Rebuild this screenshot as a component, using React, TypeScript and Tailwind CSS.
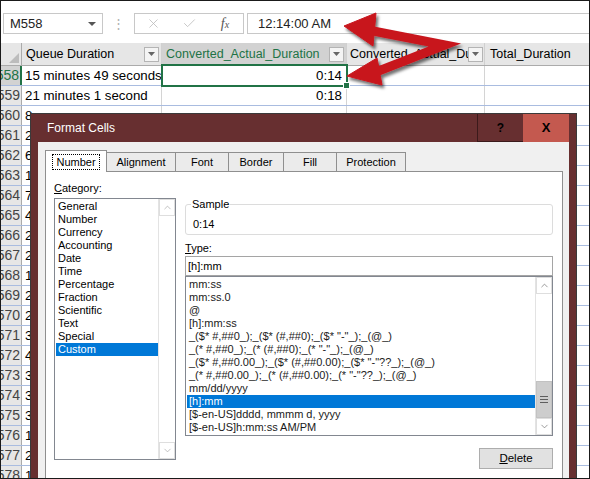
import { X, Check, ChevronUp, ChevronDown } from 'lucide-react'

const categories = [
  'General',
  'Number',
  'Currency',
  'Accounting',
  'Date',
  'Time',
  'Percentage',
  'Fraction',
  'Scientific',
  'Text',
  'Special',
  'Custom',
]

const typeFormats = [
  'mm:ss',
  'mm:ss.0',
  '@',
  '[h]:mm:ss',
  '_($* #,##0_);_($* (#,##0);_($* "-"_);_(@_)',
  '_(* #,##0_);_(* (#,##0);_(* "-"_);_(@_)',
  '_($* #,##0.00_);_($* (#,##0.00);_($* "-"??_);_(@_)',
  '_(* #,##0.00_);_(* (#,##0.00);_(* "-"??_);_(@_)',
  'mm/dd/yyyy',
  '[h]:mm',
  '[$-en-US]dddd, mmmm d, yyyy',
  '[$-en-US]h:mm:ss AM/PM',
]

// rows below 559 sit under the dialog, only their first digit shows
const rows: { n: number; queue: string; conv: string }[] = [
  { n: 558, queue: '15 minutes 49 seconds', conv: '0:14' },
  { n: 559, queue: '21 minutes 1 second', conv: '0:18' },
  { n: 560, queue: '8', conv: '' },
  { n: 561, queue: '2', conv: '' },
  { n: 562, queue: '6', conv: '' },
  { n: 563, queue: '1', conv: '' },
  { n: 564, queue: '7', conv: '' },
  { n: 565, queue: '4', conv: '' },
  { n: 566, queue: '2', conv: '' },
  { n: 567, queue: '2', conv: '' },
  { n: 568, queue: '1', conv: '' },
  { n: 569, queue: '2', conv: '' },
  { n: 570, queue: '2', conv: '' },
  { n: 571, queue: '3', conv: '' },
  { n: 572, queue: '4', conv: '' },
  { n: 573, queue: '3', conv: '' },
  { n: 574, queue: '3', conv: '' },
  { n: 575, queue: '3', conv: '' },
  { n: 576, queue: '1', conv: '' },
  { n: 577, queue: '2', conv: '' },
  { n: 578, queue: '1', conv: '' },
]

const tabs = [
  { label: 'Number', w: 'w-[62px]' },
  { label: 'Alignment', w: 'w-[70px]' },
  { label: 'Font', w: 'w-[54px]' },
  { label: 'Border', w: 'w-[56px]' },
  { label: 'Fill', w: 'w-[54px]' },
  { label: 'Protection', w: 'w-[70px]' },
]

function FilterButton() {
  return (
    <span className="w-[15px] h-[15px] border border-[#b4b4b4] bg-[#f4f4f4] flex items-center justify-center flex-shrink-0">
      <svg width="7" height="4" viewBox="0 0 7 4">
        <path d="M0 0h7L3.5 4z" fill="#666" />
      </svg>
    </span>
  )
}

function ScrollBar({ thumb, color }: { thumb?: boolean; color: string }) {
  return (
    <div className="w-[17px] flex-shrink-0 flex flex-col border-l border-[#e3e3e3] bg-white">
      <div className="h-[17px] border border-[#dedede] flex items-center justify-center">
        <ChevronUp size={11} strokeWidth={1.5} color={color} />
      </div>
      <div className="flex-1 flex flex-col justify-end">
        {thumb && (
          <div className="h-[37px] bg-[#cdcdcd] border border-[#c2c2c2] flex flex-col items-center justify-center gap-[2px]">
            <span className="w-[8px] h-[1px] bg-[#5e5e5e]" />
            <span className="w-[8px] h-[1px] bg-[#5e5e5e]" />
            <span className="w-[8px] h-[1px] bg-[#5e5e5e]" />
          </div>
        )}
      </div>
      <div className="h-[17px] border border-[#dedede] flex items-center justify-center">
        <ChevronDown size={11} strokeWidth={1.5} color={color} />
      </div>
    </div>
  )
}

function FormatCellsDialog() {
  return (
    <div className="absolute left-[29px] top-[112px] w-[547px] h-[380px] bg-[#672f30] border border-[#3a3a3a] flex flex-col font-['Liberation_Sans',Arial,sans-serif] text-[11px] text-black">
      {/* Title bar */}
      <div className="h-[28px] flex items-stretch pr-[7px] flex-shrink-0">
        <div className="flex-1 flex items-center pl-[16px] text-[12px] text-white">Format Cells</div>
        <div className="w-[46px] border-l border-b border-[#3b1a1b] flex items-center justify-center text-[12px] font-bold">?</div>
        <div className="w-[46px] bg-[#c4594f] flex items-center justify-center text-[13px] font-bold">X</div>
      </div>

      {/* Body */}
      <div className="flex-1 mx-[7px] bg-[#f0f0f0] pl-[7px] pt-[8px] flex flex-col">
        <div className="flex items-end h-[21px]">
          {tabs.map((t, i) =>
            i === 0 ? (
              <div
                key={t.label}
                className={`${t.w} h-[22px] -mb-[1px] relative z-10 bg-white border border-[#8f8f8f] border-b-0 flex items-center justify-center`}
              >
                <span className="outline-1 outline-dotted outline-black px-[3px] leading-[14px]">{t.label}</span>
              </div>
            ) : (
              <div
                key={t.label}
                className={`${t.w} h-[19px] -ml-[1px] bg-[#ebebeb] border border-[#8f8f8f] border-b-0 flex items-center justify-center`}
              >
                {t.label}
              </div>
            ),
          )}
        </div>

        <div className="w-[518px] flex-1 border border-[#8f8f8f] bg-white flex gap-[9px] pl-[8px]">
          {/* Category */}
          <div className="w-[122px] flex flex-col">
            <div className="mt-[9px] leading-[14px]">
              <span className="underline">C</span>ategory:
            </div>
            <div className="mt-[3px] h-[262px] border border-[#828790] flex">
              <div className="flex-1 pt-[1px] pl-[1px]">
                {categories.map((c) => (
                  <div
                    key={c}
                    className={`h-[13px] leading-[13px] pl-[2px] ${c === 'Custom' ? 'bg-[#0078d7] text-white' : ''}`}
                  >
                    {c}
                  </div>
                ))}
              </div>
              <ScrollBar color="#a6a6a6" />
            </div>
          </div>

          {/* Right column */}
          <div className="w-[368px] flex flex-col">
            <div className="mt-[32px] h-[31px] rounded-[3px] border border-[#dcdcdc] relative pt-[12px] pl-[7px] leading-[14px]">
              <span className="absolute -top-[8px] left-[5px] px-[1px] bg-white">Sample</span>
              0:14
            </div>
            <div className="mt-[6px] leading-[14px]">
              <span className="underline">T</span>ype:
            </div>
            <div className="mt-[1px] h-[20px] border border-[#a5a5a5] pl-[2px] flex items-center">[h]:mm</div>
            <div className="h-[160px] border border-[#828790] flex">
              <div className="flex-1 min-w-0 pt-[1px] pl-[1px] overflow-hidden">
                {typeFormats.map((f) => (
                  <div
                    key={f}
                    className={`h-[13px] leading-[13px] pl-[2px] whitespace-pre ${f === '[h]:mm' ? 'bg-[#0078d7] text-white' : 'text-[#1a1a1a]'}`}
                  >
                    {f}
                  </div>
                ))}
              </div>
              <ScrollBar thumb color="#6f6f6f" />
            </div>
            <div className="mt-[12px] self-end w-[74px] h-[21px] bg-[#e1e1e1] border border-[#adadad] flex items-center justify-center text-[11.5px]">
              <span className="underline">D</span>elete
            </div>
          </div>
        </div>
      </div>
    </div>
  )
}

export default function App() {
  return (
    <div className="relative w-[590px] h-[479px] overflow-hidden border border-[#1a1a1a] bg-white font-['Liberation_Sans',Arial,sans-serif] text-black">
      {/* Formula bar */}
      <div className="flex items-center h-[21px] mt-[12px] pl-[2px]">
        <div className="w-[100px] h-full border border-[#c8c8c8] flex items-center justify-between pl-[6px] pr-[6px] text-[13px] text-[#222]">
          <span>M558</span>
          <svg width="8" height="4" viewBox="0 0 8 4">
            <path d="M0 0h8L4 4z" fill="#555" />
          </svg>
        </div>
        <div className="w-[31px] flex justify-center text-[#b0b0b0] text-[13px] leading-none">⋮</div>
        <div className="w-[110px] h-full border border-[#c8c8c8] flex items-center">
          <span className="w-[36px] flex justify-center">
            <X size={15} strokeWidth={1.25} color="#b9b9b9" />
          </span>
          <span className="w-[36px] flex justify-center">
            <Check size={15} strokeWidth={1.25} color="#b9b9b9" />
          </span>
          <span className="w-[36px] flex justify-center">
            <span className="font-['Liberation_Serif',serif] italic text-[14px] leading-none text-[#555]">
              f<span className="text-[10px]">x</span>
            </span>
          </span>
        </div>
        <div className="flex-1 h-full ml-[3px] border border-[#c8c8c8] border-r-0 flex items-center pl-[10px] text-[13px] text-[#222]">
          12:14:00 AM
        </div>
      </div>

      {/* Column headers */}
      <div className="mt-[9px] flex h-[23px] bg-[#e6e6e6] border-b border-[#ababab] text-[12.5px]">
        <div className="w-[21px] border-r border-[#ababab] flex items-end justify-end pr-[2px] pb-[2px]">
          <svg width="10" height="10" viewBox="0 0 10 10">
            <path d="M10 0v10H0z" fill="#bcbcbc" />
          </svg>
        </div>
        <div className="w-[140px] border-r border-[#d0d0d0] flex items-center justify-between pl-[4px] pr-[2px]">
          <span className="whitespace-nowrap">Queue Duration</span>
          <FilterButton />
        </div>
        <div className="w-[185px] bg-[#d2d2d2] text-[#217346] border-r border-[#d0d0d0] flex items-center pl-[4px] pr-[2px]">
          <span className="flex-1 min-w-0 overflow-hidden whitespace-nowrap">Converted_Actual_Duration</span>
          <FilterButton />
        </div>
        <div className="w-[138px] border-r border-[#d0d0d0] flex items-center pl-[3px] pr-[1px]">
          <span className="flex-1 min-w-0 overflow-hidden whitespace-nowrap">Converted_Actual_Du</span>
          <FilterButton />
        </div>
        <div className="flex-1 flex items-center pl-[5px] whitespace-nowrap">Total_Duration</div>
      </div>

      {/* Rows */}
      {rows.map((r) => {
        const active = r.n === 558
        return (
          <div key={r.n} className="flex h-[20px] border-b border-[#a9bce0]">
            <div
              className={`w-[21px] flex justify-end items-center overflow-hidden pr-[1px] text-[14px] ${
                active ? 'bg-[#d2d2d2] text-[#217346] border-r-2 border-[#217346]' : 'bg-[#e6e6e6] text-[#444] border-r border-[#ababab]'
              }`}
            >
              {r.n}
            </div>
            <div className="w-[140px] border-r border-[#d4d4d4] pl-[3px] flex items-center overflow-hidden whitespace-nowrap text-[13.3px]">
              {r.queue}
            </div>
            <div className="w-[185px] border-r border-[#d4d4d4] pr-[4px] flex items-center justify-end text-[13.3px]">
              {r.conv}
            </div>
            <div className="w-[138px] border-r border-[#d4d4d4]" />
            <div className="flex-1" />
          </div>
        )
      })}

      {/* Selected cell */}
      <div className="absolute left-[160px] top-[63px] w-[187px] h-[23px] border-2 border-[#217346]" />
      <div className="absolute left-[342px] top-[81px] w-[7px] h-[7px] bg-[#217346] border border-white" />

      <FormatCellsDialog />

      {/* Callout arrows */}
      <svg className="absolute -left-px -top-px w-[590px] h-[479px] pointer-events-none" viewBox="0 0 590 479">
        <defs>
          <filter id="arrowShadow" x="-20%" y="-20%" width="140%" height="140%">
            <feDropShadow dx="2" dy="3" stdDeviation="1.5" floodColor="#000" floodOpacity="0.55" />
          </filter>
        </defs>
        <g filter="url(#arrowShadow)" fill="#c8141e" stroke="#c8141e">
          <polyline points="368,30 445,45 376,72" fill="none" strokeWidth="9" strokeLinejoin="miter" />
          <polygon points="344,26 376,13 373,46" strokeWidth="1" />
          <polygon points="347,76 377,58 382,85" strokeWidth="1" />
        </g>
      </svg>
    </div>
  )
}
